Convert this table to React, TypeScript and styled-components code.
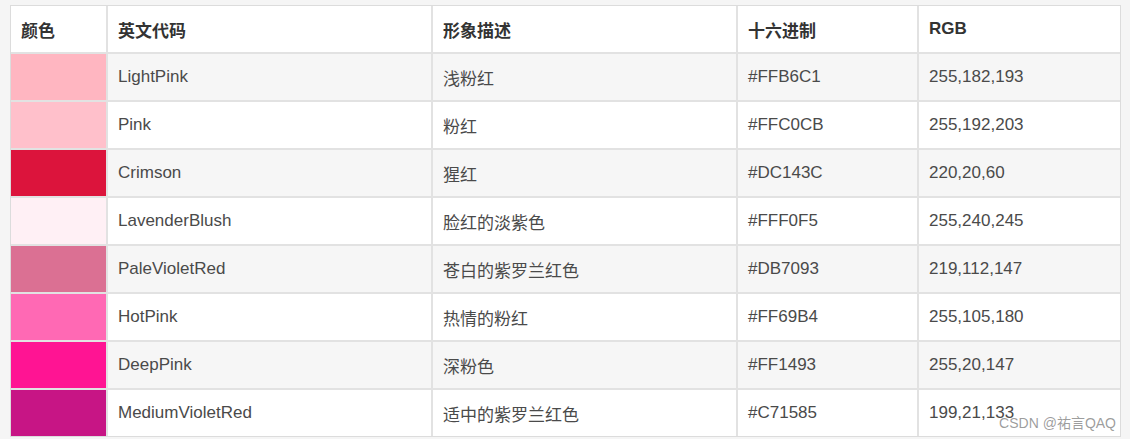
import React from 'react';
import styled, { createGlobalStyle } from 'styled-components';

const GlobalStyle = createGlobalStyle`
    html, body {
        margin: 0;
        padding: 0;
        background: #f5f5f5;
    }
    body {
        font-family: 'Liberation Sans', 'Noto Sans CJK SC', sans-serif;
    }
`;

const colors = [
    { hex: '#FFB6C1', name: 'LightPink', desc: '浅粉红', rgb: '255,182,193' },
    { hex: '#FFC0CB', name: 'Pink', desc: '粉红', rgb: '255,192,203' },
    { hex: '#DC143C', name: 'Crimson', desc: '猩红', rgb: '220,20,60' },
    { hex: '#FFF0F5', name: 'LavenderBlush', desc: '脸红的淡紫色', rgb: '255,240,245' },
    { hex: '#DB7093', name: 'PaleVioletRed', desc: '苍白的紫罗兰红色', rgb: '219,112,147' },
    { hex: '#FF69B4', name: 'HotPink', desc: '热情的粉红', rgb: '255,105,180' },
    { hex: '#FF1493', name: 'DeepPink', desc: '深粉色', rgb: '255,20,147' },
    { hex: '#C71585', name: 'MediumVioletRed', desc: '适中的紫罗兰红色', rgb: '199,21,133' },
];

const widths = [97, 325, 305, 181, 201];

const Page = styled.div`
    position: relative;
    width: 1130px;
    height: 439px;
    padding: 5px 0 0 10px;
    box-sizing: border-box;
`;

const Table = styled.table`
    width: 1111px;
    box-sizing: border-box;
    table-layout: fixed;
    border-collapse: separate;
    border-spacing: 0;
    border: 1px solid #dcdcdc;
    background: #fff;
    font-size: 17px;
`;

const HeadRow = styled.tr`
    background: #fff;
`;

const Row = styled.tr<{ $striped?: boolean }>`
    background: ${(p) => (p.$striped ? '#f6f6f6' : '#ffffff')};

    &:last-child > td {
        border-bottom: none;
        height: 46px;
    }
`;

const HeadCell = styled.th`
    box-sizing: border-box;
    height: 48px;
    padding: 0 10px;
    text-align: left;
    font-weight: bold;
    color: #333;
    border-right: 2px solid #e2e2e2;
    border-bottom: 2px solid #e2e2e2;

    &:last-child {
        border-right: none;
    }
`;

const Cell = styled.td<{ $swatch?: string }>`
    box-sizing: border-box;
    height: 48px;
    padding: 0 10px;
    color: #4a4a4a;
    background: ${(p) => p.$swatch ?? 'transparent'};
    border-right: 2px solid #e2e2e2;
    border-bottom: 2px solid #e2e2e2;
    white-space: nowrap;

    &:last-child {
        border-right: none;
    }
`;

const Watermark = styled.span`
    position: absolute;
    right: 14px;
    bottom: 7px;
    font-size: 14px;
    color: rgba(90, 90, 90, 0.6);
`;

const headers = ['颜色', '英文代码', '形象描述', '十六进制', 'RGB'];

export default function App() {
    return (
        <>
            <GlobalStyle />
            <Page>
                <Table>
                    <thead>
                        <HeadRow>
                            {headers.map((h, i) => (
                                <HeadCell key={h} style={{ width: widths[i] }}>
                                    {h}
                                </HeadCell>
                            ))}
                        </HeadRow>
                    </thead>
                    <tbody>
                        {colors.map((c, i) => (
                            <Row key={c.name} $striped={i % 2 === 0}>
                                <Cell $swatch={c.hex} />
                                <Cell>{c.name}</Cell>
                                <Cell>{c.desc}</Cell>
                                <Cell>{c.hex}</Cell>
                                <Cell>{c.rgb}</Cell>
                            </Row>
                        ))}
                    </tbody>
                </Table>
                <Watermark>CSDN @祐言QAQ</Watermark>
            </Page>
        </>
    );
}
